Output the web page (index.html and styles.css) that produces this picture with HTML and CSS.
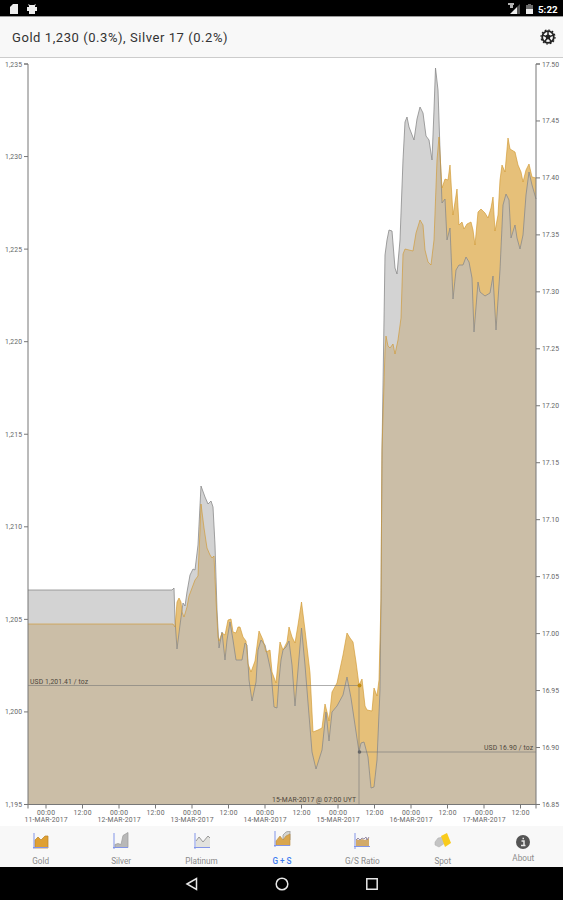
FILE: index.html
```html
<!DOCTYPE html>
<html lang="en">
<head>
    <meta charset="UTF-8">
    <meta name="viewport" content="width=device-width, initial-scale=1.0">
    <title>Gold + Silver</title>
    <link rel="stylesheet" href="styles.css">
</head>
<body>
    <div class="status">
        <svg class="status-left" width="30" height="12" viewBox="0 0 30 12">
            <path d="M4 1h5v10H1V4z"/>
            <path d="M20 3l-1-2 2 1h4l2-1-1 2v1h2v4h-2v3h-6V8h-2V4h2z"/>
        </svg>
        <svg class="status-right" width="28" height="12" viewBox="0 0 28 12">
            <path d="M0 0h6v2H5v3H2V2H0z" opacity=".75"/>
            <path d="M2 11L9 4v7z"/>
            <path d="M9 4l3-3v10H9z" opacity=".35"/>
            <path d="M20 1h3v1h2v4h-7V2h2z" opacity=".45"/>
            <path d="M18 6h7v5h-7z"/>
        </svg>
        <span class="clock">5:22</span>
    </div>
    <header class="toolbar">
        <span class="title">Gold 1,230 (0.3%), Silver 17 (0.2%)</span>
        <svg width="16" height="16" viewBox="0 0 16 16">
            <circle cx="8" cy="8" r="5.800" fill="none" stroke="#222" stroke-width="1.8"/>
            <circle cx="8" cy="8" r="7" fill="none" stroke="#222" stroke-width="1.2" stroke-dasharray="1.8 1.87"/>
            <path d="M8 8V2M8 8l5.700-1.900M8 8l3.500 4.900M8 8l-3.500 4.900M8 8L2.300 6.100" stroke="#222" stroke-width="1.5"/>
            <circle cx="8" cy="8" r="2.400" fill="#222"/>
        </svg>
    </header>
    <svg id="chart" class="chart" width="563" height="768" viewBox="0 58 563 768"></svg>
    <nav class="tabs">
        <div class="tab">
            <svg width="18" height="18" viewBox="0 0 18 18">
                <path d="M3 16V8l3-3 3 3 4-4h3v12z" fill="#dfa032" stroke="#b98228" stroke-width=".7"/>
                <path class="icon-axis" d="M2 1v16M1 15.500h15"/>
            </svg>
            <span>Gold</span>
        </div>
        <div class="tab">
            <svg width="18" height="18" viewBox="0 0 18 18">
                <path d="M3 15.500v-3l3-1 3 1 2-9 5-3v15z" fill="#b8b8b8" stroke="#999" stroke-width=".7"/>
                <path class="icon-axis" d="M2 1v16M1 15.500h15"/>
            </svg>
            <span>Silver</span>
        </div>
        <div class="tab">
            <svg width="18" height="18" viewBox="0 0 18 18">
                <path d="M3 15.500V9l3-4 4 5 5-6 2 2v9.500z" fill="#e2e2de"/>
                <path d="M3 9l3-4 4 5 5-6 2 2" fill="none" stroke="#999"/>
                <path class="icon-axis" d="M2 1v16M1 15.500h16"/>
            </svg>
            <span>Platinum</span>
        </div>
        <div class="tab active">
            <svg width="18" height="18" viewBox="0 0 18 18">
                <path d="M10 9V4l3-3 4-1v9z" fill="#d4d4cf" stroke="#999" stroke-width=".8"/>
                <path d="M3 14.500V10l4-5 3 4 3-4 4-2v11.500z" fill="#d9a64e" stroke="#b98c3e" stroke-width=".6"/>
                <path class="icon-axis" d="M2 0v16M1 14.500h16"/>
            </svg>
            <span>G + S</span>
        </div>
        <div class="tab">
            <svg width="18" height="18" viewBox="0 0 18 18">
                <path d="M3 14.500V7l3 1 3-1 3 1 4-2v8.500z" fill="#d2aa6a"/>
                <path d="M3 8l2-2 2 2 2-2 2 1 2-2 1 3 2-3" fill="none" stroke="#8d82a0" stroke-width=".9"/>
                <path class="icon-axis" d="M2 1v16M1 14.500h16"/>
            </svg>
            <span>G/S Ratio</span>
        </div>
        <div class="tab">
            <svg width="18" height="18" viewBox="0 0 18 18">
                <path d="M1 10l3-4 6-1 1 6-6 4-4-2z" fill="#c4c4c4" stroke="#aaa" stroke-width=".5"/>
                <path d="M7 4l6-3 4 10-6 4z" fill="#f9cb1c"/>
            </svg>
            <span>Spot</span>
        </div>
        <div class="tab about">
            <svg width="16" height="16" viewBox="0 0 16 16">
                <circle cx="8" cy="8" r="7" fill="#555"/>
                <path d="M6.500 7H9v4M6 11.500h4.500M7.500 4.500H9" fill="none" stroke="#e8e8e8" stroke-width="1.500"/>
            </svg>
            <span>About</span>
        </div>
    </nav>
    <footer class="navbar">
        <svg width="14" height="14" viewBox="0 0 14 14"><path d="M2 7l9.500-5.500v11z"/></svg>
        <svg width="14" height="14" viewBox="0 0 14 14"><circle cx="7" cy="7" r="5.800"/></svg>
        <svg width="14" height="14" viewBox="0 0 14 14"><path d="M1.800 1.800h10.400v10.400H1.800z"/></svg>
    </footer>
    <script src="chart.js"></script>
</body>
</html>
```
FILE: styles.css
```css
body { margin: 0; width: 563px; height: 900px; overflow: hidden; display: flex; flex-direction: column; background: #fff; font-family: Roboto, "Liberation Sans", sans-serif; }
.status { height: 16px; box-sizing: border-box; padding: 0 5px 0 9px; display: flex; align-items: center; background: #000; color: #fff; }
.status svg { fill: #eee; }
.status-left { margin-top: 1px; }
.status-right { margin-left: auto; margin-right: 2px; margin-top: 2px; }
.clock { width: 20px; padding-top: 2px; font-size: 9.8px; font-weight: 700; white-space: nowrap; }
.toolbar { height: 42px; box-sizing: border-box; padding: 0 7px 1px 12px; display: flex; align-items: center; justify-content: space-between; background: #f8f8f8; border-top: 1px solid #999; border-bottom: 1px solid #ccc; }
.title { padding-top: 1px; font-size: 13px; letter-spacing: 0.56px; color: #333; }
.chart { display: block; flex: none; }
.gold-area { fill: #e6c079; }
.silver-area { fill: #bdbdbd; fill-opacity: 0.67; }
.gold-line { fill: none; stroke: #cf972f; stroke-width: 0.8; stroke-opacity: 0.8; }
.silver-line { fill: none; stroke: #8a8a8a; stroke-width: 0.8; }
.axis { fill: none; stroke: #777; stroke-width: 1; }
.cursor { fill: none; stroke: #777; stroke-width: 0.8; stroke-opacity: 0.75; }
.label { font-size: 6.8px; fill: #666; }
.note { font-size: 6.8px; fill: #4d463b; }
.tabs { height: 41px; display: flex; background: #f8f8f8; }
.tab { flex: 1; display: flex; flex-direction: column; align-items: center; padding: 6px 0 0 1px; box-sizing: border-box; font-size: 8.2px; line-height: 10px; color: #8c8c8c; }
.tab span { margin-top: 6px; }
.tab.active { padding-top: 5px; color: #3f7df0; }
.tab.active span { margin-top: 7px; font-weight: 500; }
.tab.about { padding-top: 8px; }
.tab.about span { margin-top: 3px; }
.icon-axis { fill: none; stroke: #8295e8; stroke-width: 1; }
.navbar { height: 33px; display: flex; justify-content: center; align-items: center; gap: 76px; background: #000; }
.navbar svg { fill: none; stroke: #e6e6e6; stroke-width: 1.5; }
```
FILE: chart.js
```js
const goldPoints = "28,624 173,624 175,627 177,602 179,598 181,602 182,612 184,617 187,607 189,596 192,588 195,580 198,576 200,530 201,504 204,528 207,548 210,555 212,558 214,556 216,600 218,637 219,641 222,633 225,635 228,620 231,619 233,632 236,633 238,627 240,627 243,637 246,641 248,664 251,672 255,661 259,631 263,640 266,652 270,650 272,672 276,683 280,642 283,650 287,642 289,627 292,637 295,643 298,625 301.5,602 305,630 310,673 313,732 318,730 322,728 325,704 328,716 329,721 332,692 337,683 343,655 347,633 350,638 353,642 356,662 359,685 362,679 365,706 367,710 372,711 374,688 377,696 379,680 381,600 382,450 385,350 386,336 388,346 390,348 393,344 395,354 398,340 401,318 403,254 405,249 413,251 416,233 420,220 423,225 425,250 428,262 431,265 434,240 437,160 439,137 442,188 445,179 448,180 450,165 453,215 457,189 459,225 462,222 464,229 467,224 471,222 473,230 475,245 478,212 481,209 485,213 488,218 491,208 493,197 495,231 498,215 500,180 502,165 505,172 508,138 510,149 515,152 518,165 521,172 523,182 526,170 529,164 532,177 536,178";
const silverPoints = "28,590 172,590 174,588 175,620 177,649 180,625 183,603 185,606 187,592 190,575 193,569 195,570 198,545 201,486 205,497 208,504 211,501 213,507 215,545 217,610 219,648 222,632 225,660 227,640 230,622 233,640 236,660 242,660 245,643 247,645 249,680 252,701 256,682 258,650 261,640 265,645 268,658 271,672 274,707 277,708 279,680 281,660 283,650 286,647 289,641 292,665 295,706 298,670 301.5,628 305,665 309,715 312,752 316,769 322,750 326,712 329,741 332,712 337,706 343,695 347,677 351,698 355,725 359,752 361,743 364,742 368,757 371,788 374,787 377,760 380,690 381,600 382,450 385,255 387,240 389,230 392,231 395,268 397,274 400,240 403,160 405,122 407,117 409,127 414,140 417,119 420,107 423,113 426,136 429,140 432,160 434,110 435.5,68 438,90 440,150 442,203 445,199 447,240 450,228 453,299 456,270 459,265 463,265 466,257 469,262 472,278 474,332 478,282 480,292 485,296 490,293 493,276 496,330 500,270 503,205 506,194 509,200 511,238 515,225 517,238 520,249 523,235 526,195 529,172 532,185 536,199";

const left = 28, right = 536, top_ = 64, bottom = 804.5;

function label(x, y, text, anchor, width, cls = "label") {
    return `<text class="${cls}" x="${x}" y="${y}" text-anchor="${anchor}" textLength="${width}">${text}</text>`;
}

function area(points, name) {
    return `<polygon class="${name}-area" points="${left},${bottom} ${points} ${right},${bottom}"/>`;
}

let svg = area(goldPoints, "gold") + area(silverPoints, "silver");
svg += `<polyline class="silver-line" points="${silverPoints}"/>`;
svg += `<polyline class="gold-line" points="${goldPoints}"/>`;

// price axes
let ticks = `M${left - 4} ${top_}H${left}V${bottom}H${left - 4}M${right + 4} ${top_}H${right}V${bottom}H${right + 4}M${left} ${bottom}H${right}M${left} ${bottom}v4M${right} ${bottom}v4`;
for (let i = 0; i <= 8; i++) {
    let y = top_ + i * 92.56;
    ticks += `M${left - 4} ${y}h4`;
    svg += label(22, y + 2.5, "1," + (235 - i * 5), "end", 17);
}
for (let i = 0; i <= 13; i++) {
    let y = top_ + i * 56.96;
    ticks += `M${right} ${y}h4`;
    svg += label(542, y + 2.5, (17.5 - i * 0.05).toFixed(2), "start", 17);
}

// time axis
for (let i = 0; i < 14; i++) {
    let x = 46 + i * 36.5;
    ticks += `M${x} ${bottom}v4`;
    svg += label(x, 815, i % 2 ? "12:00" : "00:00", "middle", 18);
    if (i % 2 === 0) svg += label(x, 822, (11 + i / 2) + "-MAR-2017", "middle", 43);
}
svg += `<path class="axis" d="${ticks}"/>`;

// selected reading
svg += `<path class="cursor" d="M${left} 685.500H359V804M359 752H${right}"/>`;
svg += `<circle cx="359.500" cy="685.500" r="2" fill="#c18b13"/><circle cx="359.500" cy="752" r="1.800" fill="#666"/>`;
svg += label(30, 683.5, "USD 1,201.41 / toz", "start", 58, "note");
svg += label(533, 750, "USD 16.90 / toz", "end", 49, "note");
svg += label(356, 802, "15-MAR-2017 @ 07:00 UYT", "end", 84, "note");

document.getElementById("chart").innerHTML = svg;
```
